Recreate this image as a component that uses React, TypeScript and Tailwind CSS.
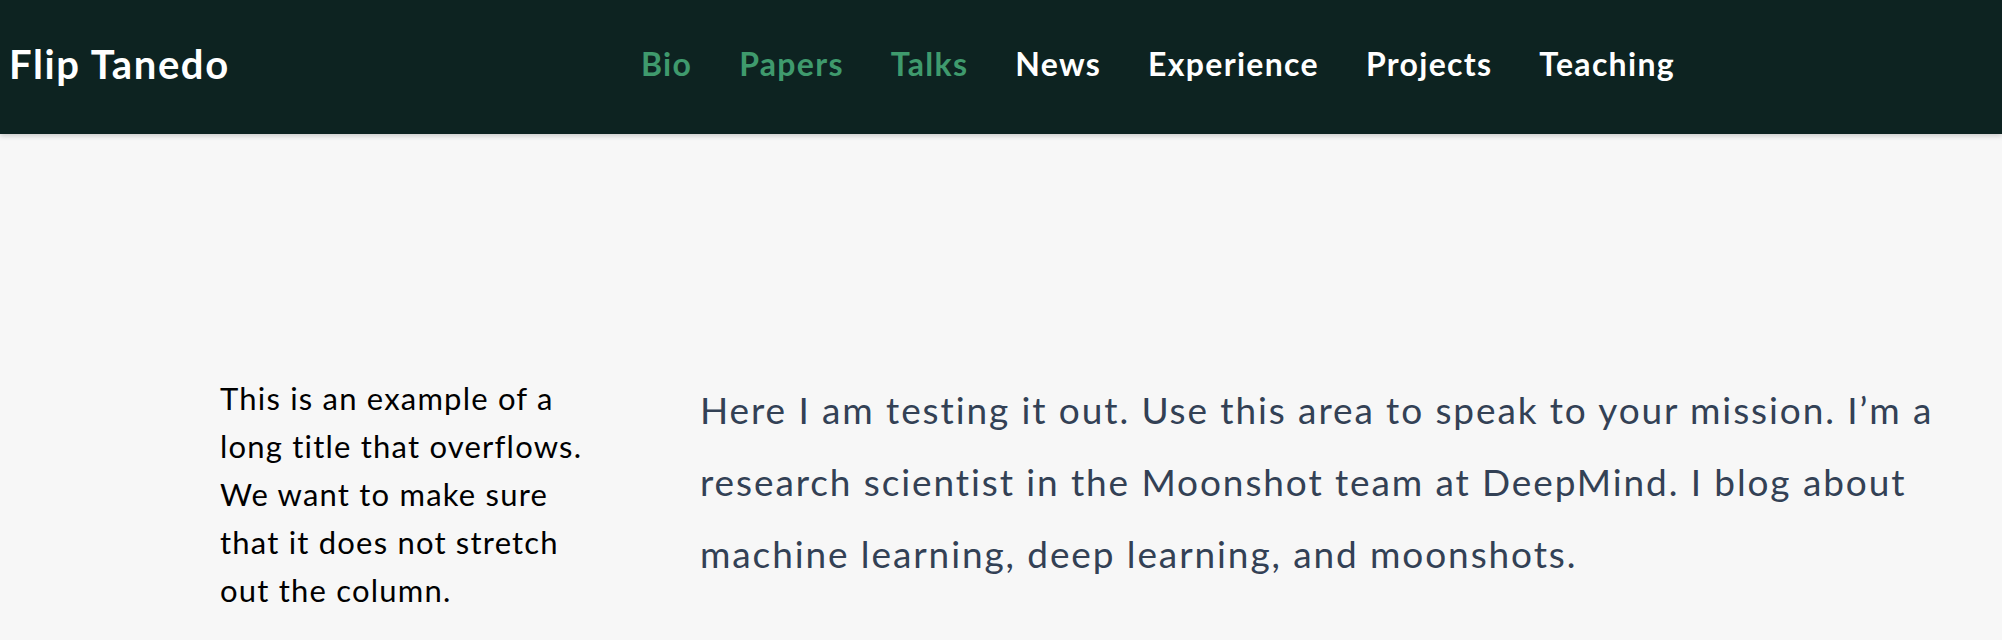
import React from "react";

const navItems = [
  { label: "Bio", active: true },
  { label: "Papers", active: true },
  { label: "Talks", active: true },
  { label: "News", active: false },
  { label: "Experience", active: false },
  { label: "Projects", active: false },
  { label: "Teaching", active: false },
];

export default function App() {
  return (
    <div className="min-h-screen bg-[#f7f7f7] font-['Lato','Open_Sans',sans-serif]">
      <header className="relative z-10 flex h-[134px] items-center bg-[#0d2321] pb-[6px] shadow-[0_2px_5px_rgba(0,0,0,0.18)]">
        <div className="w-[641px] shrink-0 pl-[9px]">
          <span className="text-[40px] font-bold tracking-[1.6px] text-white">Flip Tanedo</span>
        </div>
        <nav className="flex items-center gap-[47px]">
          {navItems.map((item) => (
            <a
              key={item.label}
              href="#"
              className={
                item.active
                  ? "text-[32px] font-bold tracking-[1.3px] text-[#3f9a6d]"
                  : "text-[32px] font-bold tracking-[1.3px] text-white"
              }
            >
              {item.label}
            </a>
          ))}
        </nav>
      </header>
      <main className="flex pt-[240px]">
        <div className="ml-[220px] w-[372px] shrink-0">
          <p className="text-[31px] leading-[48px] tracking-[1.2px] text-black">
            This is an example of a long title that overflows. We want to make sure that it does
            not stretch out the column.
          </p>
        </div>
        <div className="ml-[108px] w-[1260px] shrink-0">
          <p className="text-[37px] leading-[72px] tracking-[1.9px] text-[#334155]">
            Here I am testing it out. Use this area to speak to your mission. I’m a research
            scientist in the Moonshot team at DeepMind. I blog about machine learning, deep
            learning, and moonshots.
          </p>
        </div>
      </main>
    </div>
  );
}
